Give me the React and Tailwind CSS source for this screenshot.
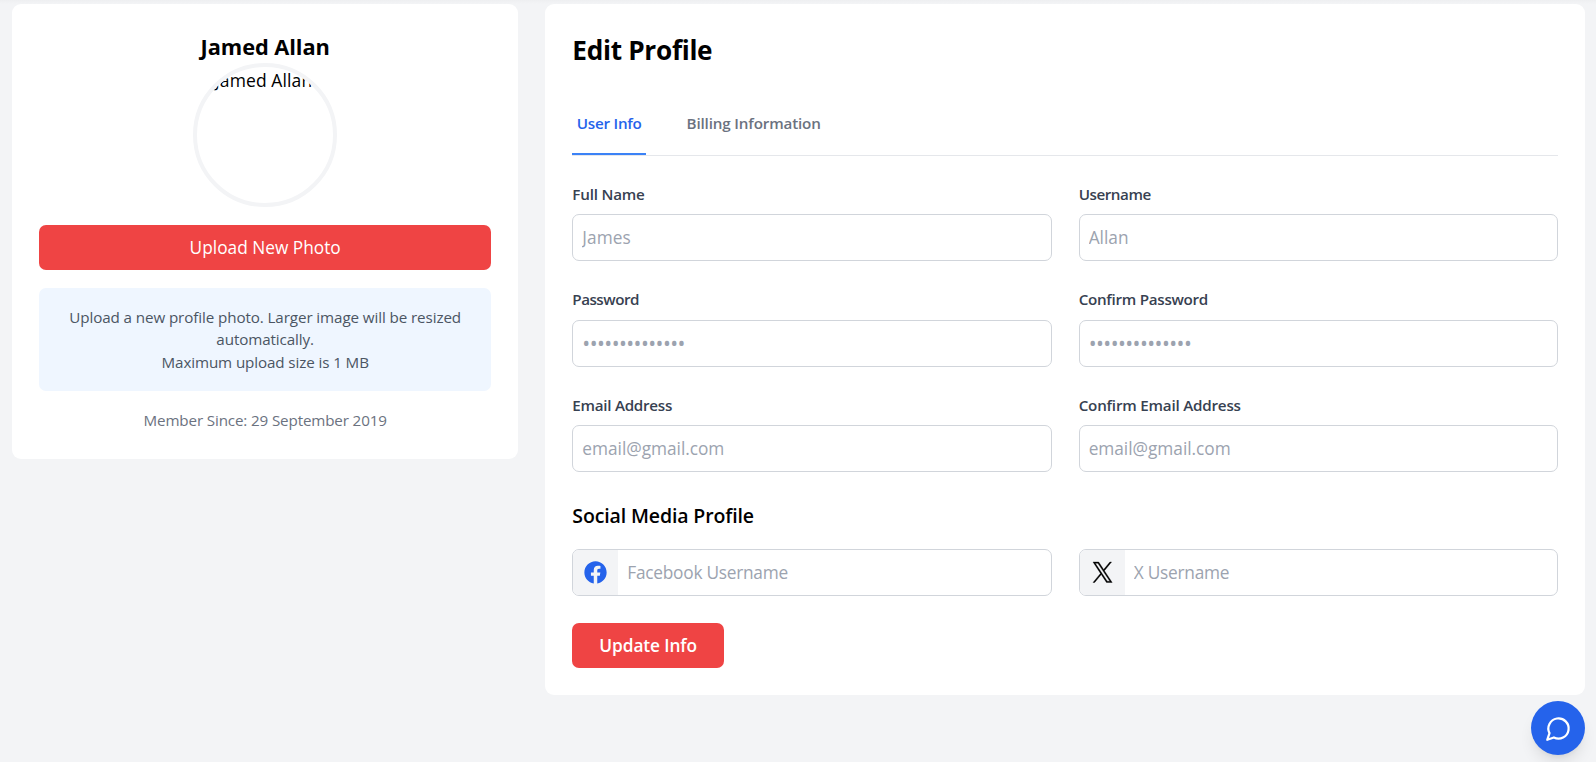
import React from "react";
import { FaFacebook } from "react-icons/fa";

function XLogo() {
  return (
    <svg
      viewBox="0 0 1200 1227"
      preserveAspectRatio="none"
      className="h-[20.5px] w-[19.2px] overflow-visible"
      fill="currentColor"
      stroke="currentColor"
      strokeWidth="22"
      aria-hidden="true"
    >
      <path d="M714.163 519.284L1160.89 0H1055.03L667.137 450.887L357.328 0H0L468.492 681.821L0 1226.37H105.866L515.491 750.218L842.672 1226.37H1200L714.137 519.284H714.163ZM569.165 687.828L521.697 619.934L144.011 79.6944H306.615L611.412 515.685L658.88 583.579L1055.08 1150.3H892.476L569.165 687.854V687.828Z" />
    </svg>
  );
}

function ChatIcon() {
  return (
    <svg
      viewBox="0 0 24 24"
      className="size-[27px]"
      fill="none"
      stroke="currentColor"
      strokeWidth="2"
      strokeLinecap="round"
      strokeLinejoin="round"
      aria-hidden="true"
    >
      <path d="M7.9 20A9 9 0 1 0 4 16.1L2 22Z" />
    </svg>
  );
}

const fields = [
  { label: "Full Name", labelClass: "tracking-[-0.2px]", placeholder: "James", inputClass: "text-[17.3px] tracking-[0.05px]" },
  { label: "Username", labelClass: "tracking-[-0.45px]", placeholder: "Allan", inputClass: "text-[17.3px] tracking-[0px]" },
  { label: "Password", labelClass: "tracking-[-0.5px]", placeholder: "••••••••••••••", inputClass: "text-[21px] tracking-[-0.57px]", type: "password" },
  { label: "Confirm Password", labelClass: "tracking-[-0.28px]", placeholder: "••••••••••••••", inputClass: "text-[21px] tracking-[-0.57px]", type: "password" },
  { label: "Email Address", labelClass: "tracking-[-0.27px]", placeholder: "email@gmail.com", inputClass: "text-[17.3px] tracking-[-0.03px]", type: "email" },
  { label: "Confirm Email Address", labelClass: "tracking-[-0.21px]", placeholder: "email@gmail.com", inputClass: "text-[17.3px] tracking-[-0.03px]", type: "email" },
];

function Field({ label, labelClass, placeholder, inputClass, type = "text" }) {
  return (
    <label className="block">
      <span className={`mb-[9px] block text-[15.2px] leading-[22.5px] font-semibold text-[#374151] ${labelClass}`}>
        {label}
      </span>
      <input
        type={type}
        placeholder={placeholder}
        className={`block h-[47px] w-full rounded-[7px] border border-[#d1d5db] px-[9px] leading-[27px] placeholder:text-[#9ca3af] ${inputClass}`}
      />
    </label>
  );
}

function SocialField({ icon, iconClass, placeholder, inputClass }) {
  return (
    <div className="flex h-[47px] overflow-hidden rounded-[7px] border border-[#d1d5db]">
      <span className={`flex w-[45px] shrink-0 items-center justify-center bg-[#f3f4f6] ${iconClass}`}>{icon}</span>
      <input
        type="text"
        placeholder={placeholder}
        className={`min-w-0 flex-1 px-[9px] text-[17.3px] leading-[27px] placeholder:text-[#9ca3af] ${inputClass}`}
      />
    </div>
  );
}

function ProfileCard() {
  return (
    <section className="flex flex-col items-center self-start rounded-[9px] bg-white p-[27px] text-center">
      <h2 className="text-[21.8px] leading-[31.5px] font-bold tracking-[-0.07px]">Jamed Allan</h2>
      <div className="size-[144px] overflow-hidden rounded-full border-4 border-[#f3f4f6] pr-[3px] text-[17.5px] leading-[27px] tracking-[0.1px]">
        Jamed Allan
      </div>
      <button className="mt-[18px] h-[45px] w-full rounded-[7px] bg-[#ef4444] text-[17.3px] leading-[27px] text-white">
        Upload New Photo
      </button>
      <div className="mt-[18px] w-full rounded-[7px] bg-[#eff6ff] p-[18px] text-[15.2px] leading-[22.5px] text-[#4b5563]">
        <p className="tracking-[-0.1px]">
          Upload a new profile photo. Larger image will be resized
          <br />
          automatically.
        </p>
        <p className="tracking-[-0.11px]">Maximum upload size is 1 MB</p>
      </div>
      <p className="mt-[18px] text-[15.2px] leading-[22.5px] tracking-[-0.14px] text-[#6b7280]">
        Member Since: 29 September 2019
      </p>
    </section>
  );
}

function EditProfile() {
  return (
    <section className="col-span-2 rounded-[9px] bg-white p-[27px]">
      <h1 className="mb-[26px] pt-px text-[26.2px] leading-[36px] font-bold tracking-[-0.3px]">Edit Profile</h1>
      <nav className="flex gap-[36px] border-b border-[#e5e7eb] text-[15.2px] leading-[22.5px] font-semibold">
        <button className="border-b-2 border-[#3b82f6] px-[4.5px] py-[18px] tracking-[-0.25px] text-[#2563eb]">
          User Info
        </button>
        <button className="border-b-2 border-transparent px-[4.5px] py-[18px] tracking-[-0.15px] text-[#6b7280]">
          Billing Information
        </button>
      </nav>
      <form className="pt-[27px]">
        <div className="grid grid-cols-2 gap-[27px]">
          {fields.map((field) => (
            <Field key={field.label} {...field} />
          ))}
        </div>
        <h3 className="mt-[28px] mb-[17px] text-[19.5px] leading-[31.5px] font-semibold tracking-[-0.13px]">
          Social Media Profile
        </h3>
        <div className="grid grid-cols-2 gap-[27px]">
          <SocialField
            icon={<FaFacebook size={23} />}
            iconClass="text-[#2563eb]"
            placeholder="Facebook Username"
            inputClass="tracking-[-0.26px]"
          />
          <SocialField
            icon={<XLogo />}
            iconClass="text-black"
            placeholder="X Username"
            inputClass="tracking-[-0.23px]"
          />
        </div>
        <button
          type="button"
          className="mt-[27px] block h-[45px] rounded-[7px] bg-[#ef4444] px-[27px] text-[17.3px] leading-[27px] font-semibold tracking-[-0.1px] text-white"
        >
          Update Info
        </button>
      </form>
    </section>
  );
}

export default function App() {
  return (
    <div className="min-h-screen bg-[#f3f4f6] bg-[linear-gradient(to_bottom,#eeeff1,#f3f4f6_4px)] font-['Open_Sans','Noto_Sans',sans-serif] text-black">
      <main className="grid grid-cols-3 gap-[27px] pt-[4px] pr-[11px] pl-[12px]">
        <ProfileCard />
        <EditProfile />
      </main>
      <button
        aria-label="Open chat"
        className="fixed right-[11px] bottom-[7px] flex size-[54px] items-center justify-center rounded-full bg-[#2563eb] text-white shadow-lg"
      >
        <ChatIcon />
      </button>
    </div>
  );
}
